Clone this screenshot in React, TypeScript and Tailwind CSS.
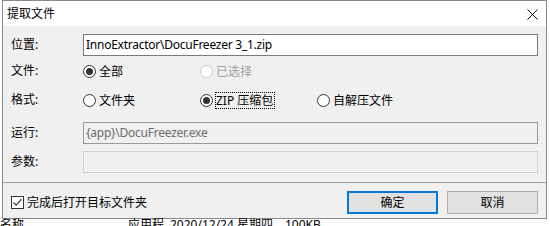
import React from "react";

const FONT = '"Noto Sans", "Noto Sans CJK SC", sans-serif';

function Radio({ checked, disabled, label, focus }: { checked?: boolean; disabled?: boolean; label: string; focus?: boolean }) {
  return (
    <div className="flex items-center w-[117px] h-[22px]">
      <span
        className={
          "w-[13px] h-[13px] rounded-full border flex items-center justify-center shrink-0 " +
          (disabled ? "border-[#cccccc] bg-white" : "border-[#333333] bg-white")
        }
      >
        {checked && <span className="w-[7px] h-[7px] rounded-full bg-[#333333]" />}
      </span>
      <span
        className={
          "ml-[2px] leading-[15px] pr-[1px] " +
          (disabled ? "text-[#a0a0a0] " : "text-black ") +
          (focus ? "border border-dotted border-black" : "border border-transparent")
        }
      >
        {label}
      </span>
    </div>
  );
}

export default function App() {
  return (
    <div className="w-[550px] h-[226px] bg-white overflow-hidden text-[12px] text-black" style={{ fontFamily: FONT }}>
      <div className="ml-[2px] w-[545px] h-[219px] border border-[#8a8a8a] bg-[#f0f0f0] flex flex-col">
        {/* title bar */}
        <div className="h-[25px] bg-white flex items-center justify-between pl-[4px] pr-[8px] shrink-0">
          <span className="text-[12px]">提取文件</span>
          <svg width="11" height="11" viewBox="0 0 11 11" className="mt-[1px]">
            <path d="M0.5 0.5 L10.5 10.5 M10.5 0.5 L0.5 10.5" stroke="#111" strokeWidth="1" />
          </svg>
        </div>

        {/* row 1 */}
        <div className="flex items-center h-[22px] mt-[8px] px-[8px]">
          <span className="w-[72px]">位置:</span>
          <div className="flex-1 h-[22px] bg-white border border-[#7a7a7a] flex items-center pl-[2px] tracking-[-0.25px]">
            InnoExtractor\DocuFreezer 3_1.zip
          </div>
        </div>

        {/* row 2 */}
        <div className="flex items-center h-[22px] mt-[4px] px-[8px]">
          <span className="w-[72px]">文件:</span>
          <Radio checked label="全部" />
          <Radio disabled label="已选择" />
        </div>

        {/* row 3 */}
        <div className="flex items-center h-[22px] mt-[7px] px-[8px]">
          <span className="w-[72px]">格式:</span>
          <Radio label="文件夹" />
          <Radio checked focus label="ZIP 压缩包" />
          <Radio label="自解压文件" />
        </div>

        {/* row 4 */}
        <div className="flex items-center h-[22px] mt-[11px] px-[8px]">
          <span className="w-[72px]">运行:</span>
          <div className="flex-1 h-[22px] bg-[#f0f0f0] border border-[#9a9a9a] flex items-center pl-[2px] text-[#6d6d6d] tracking-[-0.25px]">
            {"{app}\\DocuFreezer.exe"}
          </div>
        </div>

        {/* row 5 */}
        <div className="flex items-center h-[22px] mt-[7px] px-[8px]">
          <span className="w-[72px]">参数:</span>
          <div className="flex-1 h-[22px] bg-[#f0f0f0] border border-[#d0d0d0]" />
        </div>

        {/* separator */}
        <div className="h-[1px] bg-[#a0a0a0] mt-[9px] shrink-0" />

        {/* bottom row */}
        <div className="flex items-center h-[23px] mt-[8px] px-[8px]">
          <div className="flex items-center flex-1">
            <span className="w-[13px] h-[13px] border border-[#333333] bg-white flex items-center justify-center">
              <svg width="11" height="11" viewBox="0 0 11 11">
                <path d="M1.5 5.5 L4.2 8.2 L9.5 2.2" stroke="#333" strokeWidth="1.2" fill="none" />
              </svg>
            </span>
            <span className="ml-[3px]">完成后打开目标文件夹</span>
          </div>
          <button className="w-[91px] h-[23px] bg-[#e1e1e1] border-2 border-[#0078d7] flex items-center justify-center text-[12px]">
            确定
          </button>
          <button className="w-[91px] h-[23px] ml-[9px] bg-[#e1e1e1] border border-[#adadad] flex items-center justify-center text-[12px]">
            取消
          </button>
        </div>
      </div>

      {/* background content peeking below */}
      <div className="flex leading-[14px] text-[12px] text-black -mt-[1px]">
        <span className="w-[128px]">名称</span>
        <span className="w-[42px]">应用程序</span>
        <span className="w-[115px]">2020/12/24 星期四</span>
        <span>100KB</span>
      </div>
    </div>
  );
}
